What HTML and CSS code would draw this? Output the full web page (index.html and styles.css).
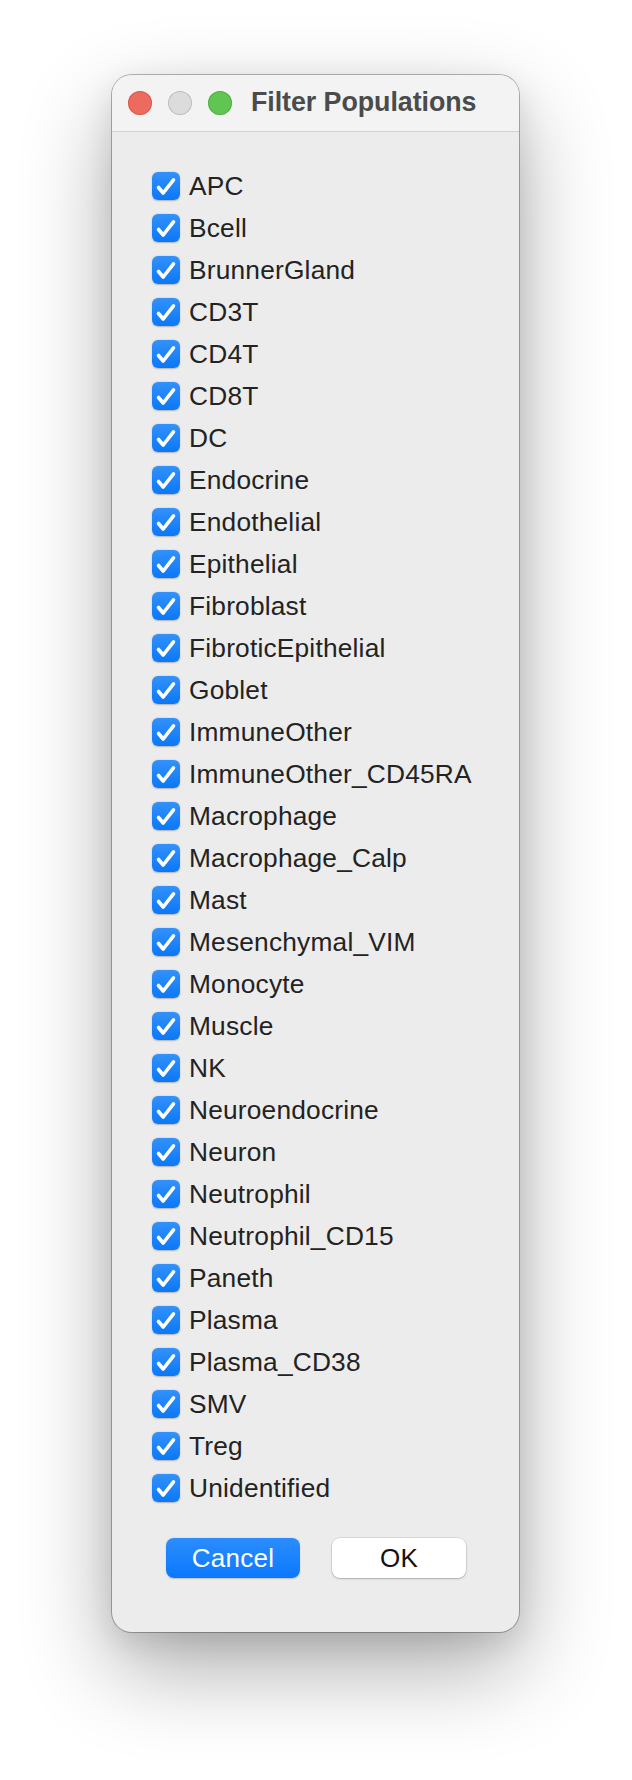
FILE: index.html
```html
<!DOCTYPE html>
<html>
<head>
<meta charset="utf-8">
<title>Filter Populations</title>
<link rel="stylesheet" href="styles.css">
</head>
<body>
<div class="window">
  <div class="titlebar">
    <div class="lights">
      <span class="light red"></span>
      <span class="light gray"></span>
      <span class="light green"></span>
    </div>
    <div class="title">Filter Populations</div>
  </div>
  <div class="content">
    <ul class="list" id="list">
      <li class="row"><span class="box"><svg viewBox="0 0 28 28"><path d="M6.5 15.5 L11.2 21 L21.5 7.8"/></svg></span><span class="label">APC</span></li>
      <li class="row"><span class="box"><svg viewBox="0 0 28 28"><path d="M6.5 15.5 L11.2 21 L21.5 7.8"/></svg></span><span class="label">Bcell</span></li>
      <li class="row"><span class="box"><svg viewBox="0 0 28 28"><path d="M6.5 15.5 L11.2 21 L21.5 7.8"/></svg></span><span class="label">BrunnerGland</span></li>
      <li class="row"><span class="box"><svg viewBox="0 0 28 28"><path d="M6.5 15.5 L11.2 21 L21.5 7.8"/></svg></span><span class="label">CD3T</span></li>
      <li class="row"><span class="box"><svg viewBox="0 0 28 28"><path d="M6.5 15.5 L11.2 21 L21.5 7.8"/></svg></span><span class="label">CD4T</span></li>
      <li class="row"><span class="box"><svg viewBox="0 0 28 28"><path d="M6.5 15.5 L11.2 21 L21.5 7.8"/></svg></span><span class="label">CD8T</span></li>
      <li class="row"><span class="box"><svg viewBox="0 0 28 28"><path d="M6.5 15.5 L11.2 21 L21.5 7.8"/></svg></span><span class="label">DC</span></li>
      <li class="row"><span class="box"><svg viewBox="0 0 28 28"><path d="M6.5 15.5 L11.2 21 L21.5 7.8"/></svg></span><span class="label">Endocrine</span></li>
      <li class="row"><span class="box"><svg viewBox="0 0 28 28"><path d="M6.5 15.5 L11.2 21 L21.5 7.8"/></svg></span><span class="label">Endothelial</span></li>
      <li class="row"><span class="box"><svg viewBox="0 0 28 28"><path d="M6.5 15.5 L11.2 21 L21.5 7.8"/></svg></span><span class="label">Epithelial</span></li>
      <li class="row"><span class="box"><svg viewBox="0 0 28 28"><path d="M6.5 15.5 L11.2 21 L21.5 7.8"/></svg></span><span class="label">Fibroblast</span></li>
      <li class="row"><span class="box"><svg viewBox="0 0 28 28"><path d="M6.5 15.5 L11.2 21 L21.5 7.8"/></svg></span><span class="label">FibroticEpithelial</span></li>
      <li class="row"><span class="box"><svg viewBox="0 0 28 28"><path d="M6.5 15.5 L11.2 21 L21.5 7.8"/></svg></span><span class="label">Goblet</span></li>
      <li class="row"><span class="box"><svg viewBox="0 0 28 28"><path d="M6.5 15.5 L11.2 21 L21.5 7.8"/></svg></span><span class="label">ImmuneOther</span></li>
      <li class="row"><span class="box"><svg viewBox="0 0 28 28"><path d="M6.5 15.5 L11.2 21 L21.5 7.8"/></svg></span><span class="label">ImmuneOther_CD45RA</span></li>
      <li class="row"><span class="box"><svg viewBox="0 0 28 28"><path d="M6.5 15.5 L11.2 21 L21.5 7.8"/></svg></span><span class="label">Macrophage</span></li>
      <li class="row"><span class="box"><svg viewBox="0 0 28 28"><path d="M6.5 15.5 L11.2 21 L21.5 7.8"/></svg></span><span class="label">Macrophage_Calp</span></li>
      <li class="row"><span class="box"><svg viewBox="0 0 28 28"><path d="M6.5 15.5 L11.2 21 L21.5 7.8"/></svg></span><span class="label">Mast</span></li>
      <li class="row"><span class="box"><svg viewBox="0 0 28 28"><path d="M6.5 15.5 L11.2 21 L21.5 7.8"/></svg></span><span class="label">Mesenchymal_VIM</span></li>
      <li class="row"><span class="box"><svg viewBox="0 0 28 28"><path d="M6.5 15.5 L11.2 21 L21.5 7.8"/></svg></span><span class="label">Monocyte</span></li>
      <li class="row"><span class="box"><svg viewBox="0 0 28 28"><path d="M6.5 15.5 L11.2 21 L21.5 7.8"/></svg></span><span class="label">Muscle</span></li>
      <li class="row"><span class="box"><svg viewBox="0 0 28 28"><path d="M6.5 15.5 L11.2 21 L21.5 7.8"/></svg></span><span class="label">NK</span></li>
      <li class="row"><span class="box"><svg viewBox="0 0 28 28"><path d="M6.5 15.5 L11.2 21 L21.5 7.8"/></svg></span><span class="label">Neuroendocrine</span></li>
      <li class="row"><span class="box"><svg viewBox="0 0 28 28"><path d="M6.5 15.5 L11.2 21 L21.5 7.8"/></svg></span><span class="label">Neuron</span></li>
      <li class="row"><span class="box"><svg viewBox="0 0 28 28"><path d="M6.5 15.5 L11.2 21 L21.5 7.8"/></svg></span><span class="label">Neutrophil</span></li>
      <li class="row"><span class="box"><svg viewBox="0 0 28 28"><path d="M6.5 15.5 L11.2 21 L21.5 7.8"/></svg></span><span class="label">Neutrophil_CD15</span></li>
      <li class="row"><span class="box"><svg viewBox="0 0 28 28"><path d="M6.5 15.5 L11.2 21 L21.5 7.8"/></svg></span><span class="label">Paneth</span></li>
      <li class="row"><span class="box"><svg viewBox="0 0 28 28"><path d="M6.5 15.5 L11.2 21 L21.5 7.8"/></svg></span><span class="label">Plasma</span></li>
      <li class="row"><span class="box"><svg viewBox="0 0 28 28"><path d="M6.5 15.5 L11.2 21 L21.5 7.8"/></svg></span><span class="label">Plasma_CD38</span></li>
      <li class="row"><span class="box"><svg viewBox="0 0 28 28"><path d="M6.5 15.5 L11.2 21 L21.5 7.8"/></svg></span><span class="label">SMV</span></li>
      <li class="row"><span class="box"><svg viewBox="0 0 28 28"><path d="M6.5 15.5 L11.2 21 L21.5 7.8"/></svg></span><span class="label">Treg</span></li>
      <li class="row"><span class="box"><svg viewBox="0 0 28 28"><path d="M6.5 15.5 L11.2 21 L21.5 7.8"/></svg></span><span class="label">Unidentified</span></li>
    </ul>
    <div class="buttons">
      <button class="btn primary">Cancel</button>
      <button class="btn secondary">OK</button>
    </div>
  </div>
</div>
</body>
</html>
```

FILE: styles.css
```css
* { box-sizing: border-box; }

html, body {
  margin: 0;
  padding: 0;
  background: #ffffff;
}

body {
  width: 632px;
  height: 1780px;
  overflow: hidden;
  font-family: "Liberation Sans", Arial, sans-serif;
}

.window {
  margin: 75px 0 0 112px;
  width: 407px;
  height: 1557px;
  border-radius: 20px;
  background: #ececec;
  box-shadow:
    0 0 0 1px rgba(0, 0, 0, 0.28),
    0 36px 90px rgba(0, 0, 0, 0.33),
    0 10px 30px rgba(0, 0, 0, 0.10);
  overflow: hidden;
  display: flex;
  flex-direction: column;
}

.titlebar {
  height: 57px;
  flex: none;
  background: #f3f3f3;
  border-bottom: 1px solid #d3d3d3;
  display: flex;
  align-items: center;
  padding-left: 16px;
}

.lights {
  display: flex;
  gap: 16px;
}

.light {
  width: 24px;
  height: 24px;
  border-radius: 50%;
  display: block;
}

.light.red {
  background: #ed6a5e;
  box-shadow: inset 0 0 0 1px rgba(190, 70, 60, 0.45);
}

.light.gray {
  background: #dcdcdc;
  box-shadow: inset 0 0 0 1px rgba(0, 0, 0, 0.14);
}

.light.green {
  background: #61c554;
  box-shadow: inset 0 0 0 1px rgba(60, 150, 50, 0.45);
}

.title {
  margin-left: 19px;
  font-size: 26.8px;
  font-weight: bold;
  color: #4b4b4b;
  letter-spacing: -0.05px;
  padding-bottom: 2px;
}

.content {
  padding: 33px 0 0 40px;
  display: flex;
  flex-direction: column;
}

.list {
  list-style: none;
  margin: 0;
  padding: 0;
}

.row {
  height: 42px;
  display: flex;
  align-items: center;
  gap: 9px;
}

.box {
  width: 28px;
  height: 28px;
  flex: none;
  border-radius: 6px;
  background: linear-gradient(#3391fb, #0b78f6);
  box-shadow: 0 0.5px 1.5px rgba(0, 0, 0, 0.25);
  display: block;
}

.box svg {
  width: 28px;
  height: 28px;
  display: block;
}

.box path {
  fill: none;
  stroke: #ffffff;
  stroke-width: 3.6;
  stroke-linecap: round;
  stroke-linejoin: round;
}

.label {
  font-size: 26.3px;
  color: #232323;
  line-height: 1;
  letter-spacing: 0.2px;
}

.buttons {
  margin-top: 29px;
  margin-left: 14px;
  display: flex;
  gap: 32px;
}

.btn {
  width: 134px;
  height: 40px;
  border-radius: 8px;
  font-family: "Liberation Sans", Arial, sans-serif;
  font-size: 26px;
  letter-spacing: 0.3px;
  padding: 0 0 1px 0;
  border: none;
  line-height: 1;
}

.btn.primary {
  background: linear-gradient(#2c8dfd, #0a78fe);
  color: #ffffff;
  box-shadow: 0 0.5px 1.5px rgba(0, 0, 0, 0.2);
}

.btn.secondary {
  background: #ffffff;
  color: #111111;
  box-shadow: 0 0 0 0.5px rgba(0, 0, 0, 0.14), 0 1px 2px rgba(0, 0, 0, 0.22);
}
```
